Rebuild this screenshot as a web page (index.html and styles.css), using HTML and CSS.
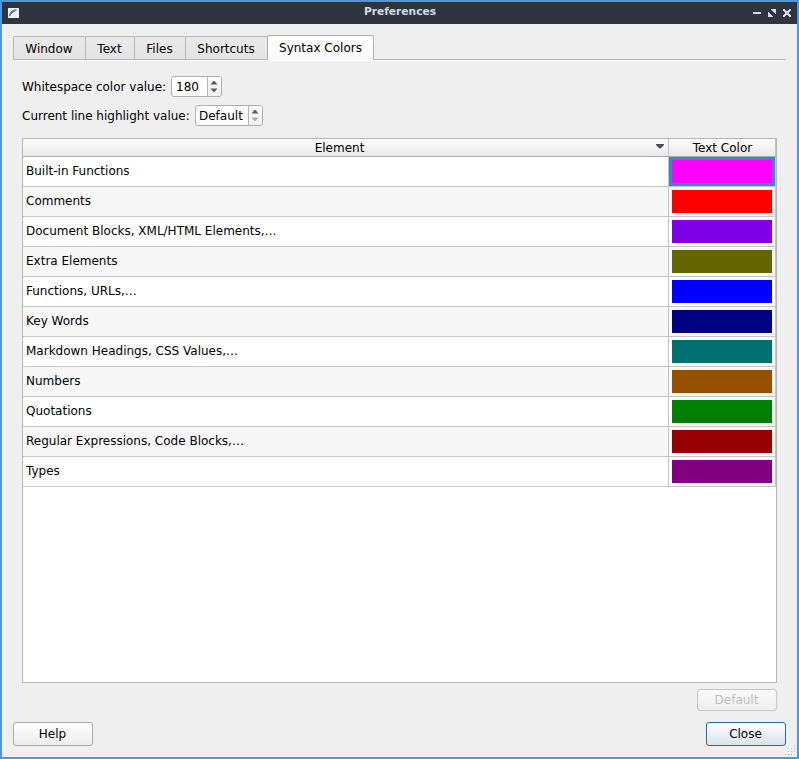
FILE: index.html
```
<!DOCTYPE html>
<html lang="en">
<head>
<meta charset="utf-8">
<title>Preferences</title>
<link rel="stylesheet" href="styles.css">
</head>
<body>
<div class="window">
  <header class="titlebar">
    <svg class="app-icon" width="11" height="10" viewBox="0 0 11 10"><rect width="11" height="10" rx=".5" fill="#f1f1ef"/><path d="M1 8.500C1 4 4 1.500 9 1C8 3.500 6 4.500 4 5L1.500 8.500Z" fill="#5b8bbd"/><path d="M1.500 8L4.500 3.500" stroke="#3a648f" stroke-width=".8" fill="none"/></svg>
    <h1>Preferences</h1>
    <div class="controls">
      <svg width="8" height="8" viewBox="0 0 8 8"><path d="M0 3h8v2H0z"/></svg>
      <svg width="8" height="8" viewBox="0 0 8 8" shape-rendering="crispEdges"><path d="M3 0h5v5H7V4H6V3H5V2H4V1H3zM0 3h1v1h1v1h1v1h1v1h1v1H0z"/></svg>
      <svg width="8" height="8" viewBox="0 0 8 8" shape-rendering="crispEdges"><path d="M0 0h2v1h1v1h2V1h1V0h2v2H7v1H6v2h1v1h1v2H6V7H5V6H3v1H2v1H0V6h1V5h1V3H1V2H0z"/></svg>
    </div>
  </header>
  <main>
    <nav class="tabs">
      <a class="tab t-window">Window</a><a class="tab t-text">Text</a><a class="tab t-files">Files</a><a class="tab t-shortcuts">Shortcuts</a><a class="tab t-colors active">Syntax Colors</a>
    </nav>
    <section class="page">
      <div class="field"><label class="l-white">Whitespace color value:</label>
        <div class="spin s-num"><span>180</span><svg width="13" height="19" viewBox="0 0 13 19"><path class="arrow" d="M2.500 7.500L5.500 4H6.500L9.500 7.500zM2.500 11.500L5.500 15H6.500L9.500 11.500z"/></svg></div></div>
      <div class="field"><label class="l-line">Current line highlight value:</label>
        <div class="spin s-def"><span>Default</span><svg width="13" height="19" viewBox="0 0 13 19"><path class="arrow" d="M2.500 7.500L5.500 4H6.500L9.500 7.500z"/><path class="arrow off" d="M2.500 11.500L5.500 15H6.500L9.500 11.500z"/></svg></div></div>
      <div class="table">
        <div class="head"><div class="name">Element<svg class="sort" width="8" height="5" viewBox="0 0 8 5"><path d="M0 0H8V1L4.500 4.500H3.500L0 1z"/></svg></div><div class="color">Text Color</div></div>
        <div class="row"><div class="name">Built-in Functions</div><div class="color selected"><i class="magenta"></i></div></div>
        <div class="row"><div class="name">Comments</div><div class="color"><i class="red"></i></div></div>
        <div class="row"><div class="name">Document Blocks, XML/HTML Elements,…</div><div class="color"><i class="violet"></i></div></div>
        <div class="row"><div class="name">Extra Elements</div><div class="color"><i class="olive"></i></div></div>
        <div class="row"><div class="name">Functions, URLs,…</div><div class="color"><i class="blue"></i></div></div>
        <div class="row"><div class="name">Key Words</div><div class="color"><i class="navy"></i></div></div>
        <div class="row"><div class="name">Markdown Headings, CSS Values,…</div><div class="color"><i class="teal"></i></div></div>
        <div class="row"><div class="name">Numbers</div><div class="color"><i class="brown"></i></div></div>
        <div class="row"><div class="name">Quotations</div><div class="color"><i class="green"></i></div></div>
        <div class="row"><div class="name">Regular Expressions, Code Blocks,…</div><div class="color"><i class="maroon"></i></div></div>
        <div class="row"><div class="name">Types</div><div class="color"><i class="purple"></i></div></div>
      </div>
      <button class="btn reset" disabled>Default</button>
    </section>
    <footer><button class="btn">Help</button><button class="btn primary">Close</button></footer>
  </main>
  <svg class="grip" width="11" height="11" viewBox="0 0 11 11" shape-rendering="crispEdges"><path d="M9 0h1v1H9zM6 3h1v1H6zM9 3h1v1H9zM3 6h1v1H3zM6 6h1v1H6zM9 6h1v1H9zM0 9h1v1H0zM3 9h1v1H3zM6 9h1v1H6zM9 9h1v1H9z"/></svg>
</div>
</body>
</html>
```
FILE: styles.css
```
* { box-sizing: border-box; }
body { margin: 0; font: 12px/16px "DejaVu Sans", sans-serif; color: #000; }
svg { display: block; }
.window { position: relative; width: 799px; height: 759px; border: 2px solid #5294e2; background: #efefef; }
.titlebar { display: flex; align-items: center; justify-content: space-between; height: 22px; padding: 0 6px 0 6px; background: #2f343f; }
.titlebar h1 { margin: 0 0 2px 28px; font-size: 10.667px; line-height: 14px; color: #d3dae3; }
.app-icon { margin-bottom: 1px; }
.controls { display: flex; gap: 7px; }
.controls svg { fill: #d3dae3; }
main { padding: 11px 11px 0; }
.tabs { display: flex; align-items: flex-end; height: 25px; border-bottom: 1px solid #b6b6b6; box-shadow: 0 1px #fff; }
.tab { height: 23px; margin-left: -1px; padding: 4px 1px 0 0; border: 1px solid #b9b9b9; border-bottom: 0; border-radius: 2px 2px 0 0; background: linear-gradient(#eaeaea, #e4e4e4); text-align: center; }
.t-window { width: 73px; margin-left: 0; }
.t-text { width: 50px; }
.t-files { width: 52px; }
.t-shortcuts { width: 83px; }
.t-colors { width: 107px; }
.tab.active { position: relative; height: 25px; margin-bottom: -1px; padding: 4px 0 0; border-color: #b0b0b0; background: linear-gradient(#fff, #fafafa); }
.page { display: flex; flex-direction: column; padding: 16px 9px 0; }
.field { display: flex; align-items: center; height: 21px; margin-bottom: 8px; }
.l-white { width: 149px; }
.l-line { width: 173px; }
.spin { display: flex; height: 21px; border: 1px solid #aeaeae; border-radius: 3px; background: #fff; overflow: hidden; }
.spin span { flex: 1; padding: 2px 0 0 4px; }
.s-def span { padding-left: 3px; }
.s-num { width: 51px; }
.s-def { width: 68px; }
.spin svg { width: 14px; border-left: 1px solid #b6b6b6; background: linear-gradient(#fff, #f0f0f0); }
.arrow { fill: #5a5a5a; }
.off { fill: #aaa; }
.table { height: 545px; margin-top: 4px; border: 1px solid #b6b6b6; background: #fff; }
.head, .row { display: grid; grid-template-columns: 646px 107px; }
.head { height: 18px; border-bottom: 1px solid #adadad; background: linear-gradient(#fcfcfc, #e9e9e9); text-align: center; }
.name, .color { border-right: 1px solid #c4c4c4; }
.head .name { position: relative; padding: 1px 12px 0 0; }
.head .color { padding: 1px 0 0 1px; }
.sort { position: absolute; right: 4px; top: 5px; fill: #4d4d4d; }
.row { height: 30px; border-bottom: 1px solid #c4c4c4; }
.row:nth-child(odd) { background: #f7f7f7; }
.row .name { padding: 6px 3px; }
.row .color { padding: 3px; }
.row i { display: block; width: 100px; height: 23px; }
.selected { background: #308cc6; }
.magenta { background: #f0f; }
.red { background: #f00; }
.violet { background: #8000e6; }
.olive { background: #646400; }
.blue { background: #00f; }
.navy { background: #000080; }
.teal { background: #007070; }
.brown { background: #965000; }
.green { background: #008000; }
.maroon { background: #960000; }
.purple { background: #800080; }
.btn { width: 80px; height: 24px; padding: 0 1px 1px 0; border: 1px solid #ababab; border-radius: 3px; background: linear-gradient(#fff, #ececec); color: #000; font: inherit; }
.btn.reset { align-self: flex-end; height: 22px; margin-top: 6px; border-color: #c6c6c6; background: linear-gradient(#fafafa, #efefef); color: #bebebe; }
.btn.primary { border-color: #1d6fa5; background: linear-gradient(#fff, #dae2ea); }
footer { display: flex; justify-content: space-between; margin-top: 11px; }
.grip { position: absolute; right: 1px; bottom: 1px; fill: #b4b4b4; }
```
